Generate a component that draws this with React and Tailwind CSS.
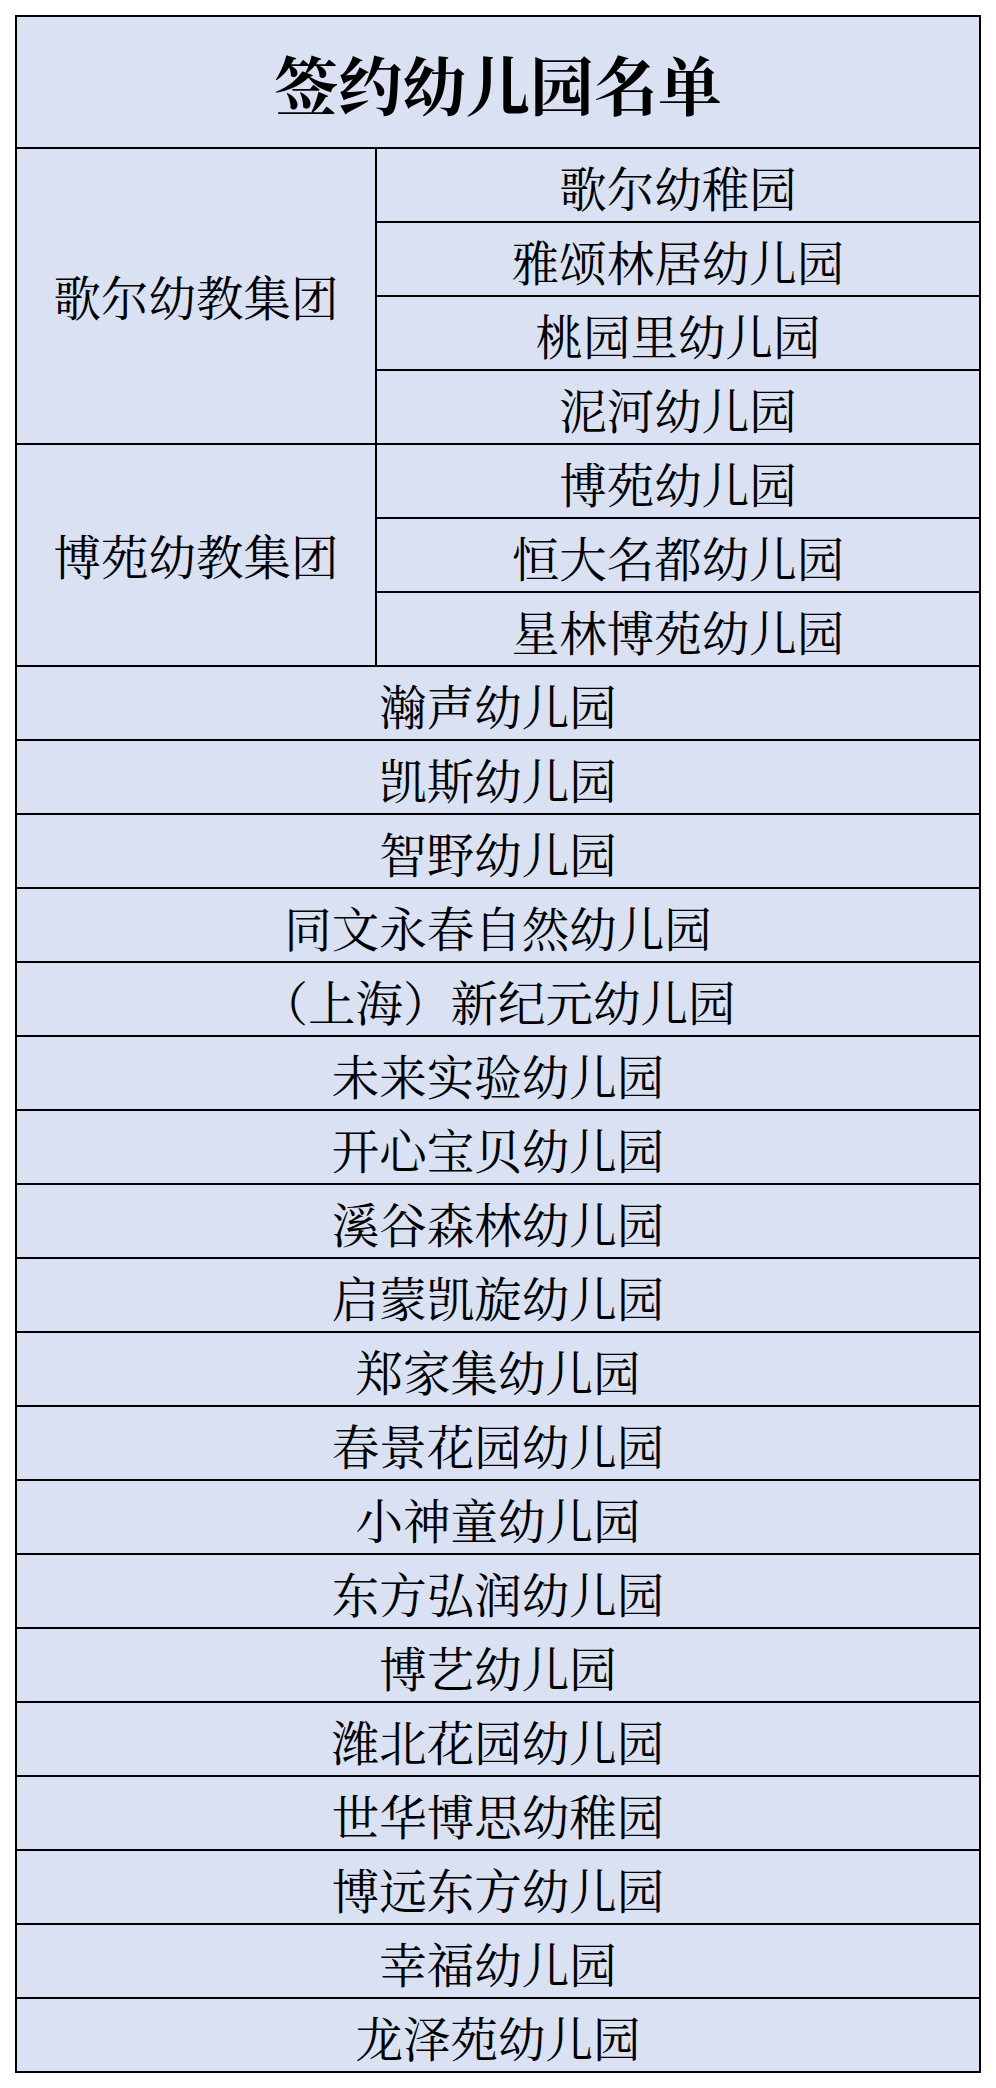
const groups = [
  { name: '歌尔幼教集团', items: ['歌尔幼稚园', '雅颂林居幼儿园', '桃园里幼儿园', '泥河幼儿园'] },
  { name: '博苑幼教集团', items: ['博苑幼儿园', '恒大名都幼儿园', '星林博苑幼儿园'] },
];

const singles = [
  '瀚声幼儿园',
  '凯斯幼儿园',
  '智野幼儿园',
  '同文永春自然幼儿园',
  '（上海）新纪元幼儿园',
  '未来实验幼儿园',
  '开心宝贝幼儿园',
  '溪谷森林幼儿园',
  '启蒙凯旋幼儿园',
  '郑家集幼儿园',
  '春景花园幼儿园',
  '小神童幼儿园',
  '东方弘润幼儿园',
  '博艺幼儿园',
  '潍北花园幼儿园',
  '世华博思幼稚园',
  '博远东方幼儿园',
  '幸福幼儿园',
  '龙泽苑幼儿园',
];

const font = { fontFamily: '"Noto Serif CJK SC", "Noto Sans CJK SC", serif' };

function Cell({ children, className = '' }) {
  return (
    <div className={`bg-[#d9e1f2] flex items-center justify-center text-[47.5px] leading-none text-black ${className}`}>
      {children}
    </div>
  );
}

export default function App() {
  return (
    <div className="bg-white min-h-[2088px] pt-[15px] pl-[15px]" style={font}>
      <div className="w-[966px] flex flex-col gap-[2px] bg-black p-[2px]">
        <div className="bg-[#d9e1f2] h-[130px] flex items-center justify-center text-[64px] font-bold leading-none text-black">
          签约幼儿园名单
        </div>

        {groups.map((g) => (
          <div key={g.name} className="flex gap-[2px]">
            <Cell className="w-[358px] shrink-0">{g.name}</Cell>
            <div className="flex-1 flex flex-col gap-[2px]">
              {g.items.map((item) => (
                <Cell key={item} className="h-[72px] pt-[4px]">{item}</Cell>
              ))}
            </div>
          </div>
        ))}

        {singles.map((name) => (
          <Cell key={name} className="h-[72px] pt-[4px]">{name}</Cell>
        ))}
      </div>
    </div>
  );
}
